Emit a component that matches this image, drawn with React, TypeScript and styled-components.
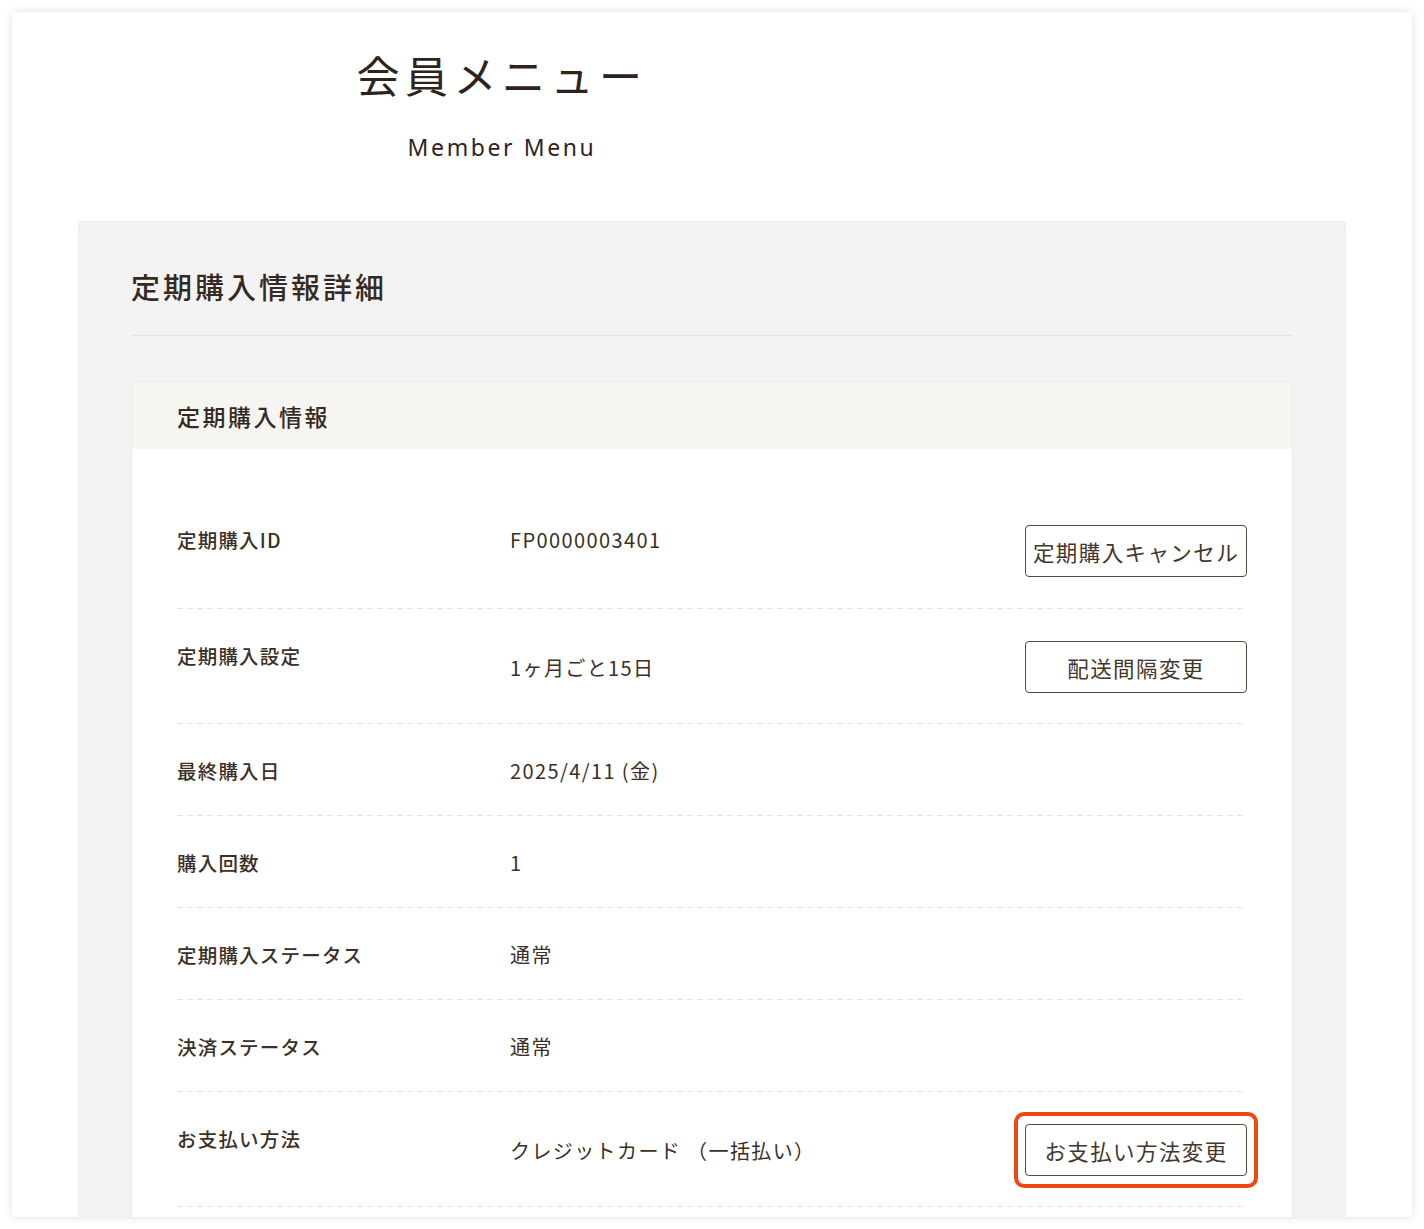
import React from "react";
import styled, { createGlobalStyle } from "styled-components";

const Global = createGlobalStyle`
  html, body { margin: 0; padding: 0; background: #ffffff; }
  body {
    font-family: "Noto Sans CJK JP", "Noto Sans", sans-serif;
    color: #3b2f27;
  }
  * { box-sizing: border-box; }
`;

const Page = styled.div`
  padding: 12px 12px 0 12px;
  height: 1229px;
  overflow: hidden;
`;

const Sheet = styled.div`
  background: #fff;
  height: 1205px;
  box-shadow: 0 0 8px rgba(0, 0, 0, 0.13);
  padding: 0 66px;
  overflow: hidden;
`;

const Header = styled.header`
  width: 848px;
  text-align: center;
  padding-top: 39px;
  height: 209px;
`;

const MainTitle = styled.h1`
  margin: 0;
  font-size: 43px;
  font-weight: 400;
  letter-spacing: 5.5px;
  line-height: 46px;
  color: #2f241d;
`;

const SubTitle = styled.p`
  margin: 35px 0 0;
  font-family: "Noto Sans", "Open Sans", sans-serif;
  font-size: 23px;
  letter-spacing: 2.6px;
  line-height: 30px;
  color: #2f241d;
`;

const Panel = styled.section`
  background: #f3f3f3;
  border: 1px solid #ececec;
  border-radius: 4px;
  padding: 0 52px 40px;
  min-height: 1100px;
`;

const PanelTitle = styled.h2`
  margin: 0;
  padding: 44px 0 29px;
  font-size: 29px;
  font-weight: 500;
  letter-spacing: 3px;
  line-height: 40px;
  color: #352a22;
  border-bottom: 1px solid #e4e4e4;
`;

const Card = styled.div`
  margin-top: 45px;
  background: #fff;
  border: 1px solid #ebebeb;
  border-radius: 4px;
  overflow: hidden;
`;

const CardHeader = styled.div`
  background: #f6f5f2;
  height: 67px;
  padding: 0 45px;
  display: flex;
  align-items: center;
  font-size: 23px;
  font-weight: 500;
  letter-spacing: 2.5px;
  color: #352a22;
`;

const CardBody = styled.div`
  padding: 44px 45px 0;
`;

const Row = styled.div`
  display: grid;
  grid-template-columns: 333px 1fr auto;
  align-items: start;
  padding: 32px 0 31px;
  background-image: linear-gradient(to right, #e4e4e4 0 6px, transparent 6px 10px);
  background-size: 10px 1px;
  background-repeat: repeat-x;
  background-position: left bottom;
  &:first-child { padding-bottom: 32px; }
`;

const Label = styled.div`
  font-size: 19.5px;
  font-weight: 500;
  letter-spacing: 1.2px;
  line-height: 29px;
  color: #3b2f27;
`;

const Value = styled.div<{ $centered?: boolean }>`
  font-size: 20px;
  letter-spacing: 1.4px;
  line-height: 29px;
  color: #3b2f27;
  align-self: ${(p) => (p.$centered ? "center" : "start")};
`;

const ButtonWrap = styled.div<{ $highlight?: boolean }>`
  position: relative;
  &::after {
    content: "";
    display: ${(p) => (p.$highlight ? "block" : "none")};
    position: absolute;
    left: -11px;
    right: -11px;
    top: -12px;
    bottom: -12px;
    border: 4px solid #ef4713;
    border-radius: 10px;
    pointer-events: none;
  }
`;

const Button = styled.button`
  display: flex;
  align-items: center;
  justify-content: center;
  width: 222px;
  height: 52px;
  padding: 0;
  background: #fff;
  border: 1.5px solid #5a4a3c;
  border-radius: 4px;
  font-family: "Noto Sans CJK JP", "Noto Sans", sans-serif;
  font-size: 21.5px;
  letter-spacing: 1.4px;
  color: #43362c;
  cursor: pointer;
`;

type Item = {
  label: string;
  value: string;
  button?: string;
  centered?: boolean;
  highlight?: boolean;
};

const items: Item[] = [
  { label: "定期購入ID", value: "FP0000003401", button: "定期購入キャンセル" },
  { label: "定期購入設定", value: "1ヶ月ごと15日", button: "配送間隔変更", centered: true },
  { label: "最終購入日", value: "2025/4/11 (金)" },
  { label: "購入回数", value: "1" },
  { label: "定期購入ステータス", value: "通常" },
  { label: "決済ステータス", value: "通常" },
  {
    label: "お支払い方法",
    value: "クレジットカード （一括払い）",
    button: "お支払い方法変更",
    centered: true,
    highlight: true,
  },
  { label: "\u00a0", value: "" },
];

export default function App() {
  return (
    <>
      <Global />
      <Page>
        <Sheet>
          <Header>
            <MainTitle>会員メニュー</MainTitle>
            <SubTitle>Member Menu</SubTitle>
          </Header>
          <Panel>
            <PanelTitle>定期購入情報詳細</PanelTitle>
            <Card>
              <CardHeader>定期購入情報</CardHeader>
              <CardBody>
                {items.map((it, i) => (
                  <Row key={i}>
                    <Label>{it.label}</Label>
                    <Value $centered={it.centered}>{it.value}</Value>
                    {it.button ? (
                      <ButtonWrap $highlight={it.highlight}>
                        <Button>{it.button}</Button>
                      </ButtonWrap>
                    ) : (
                      <span />
                    )}
                  </Row>
                ))}
              </CardBody>
            </Card>
          </Panel>
        </Sheet>
      </Page>
    </>
  );
}
